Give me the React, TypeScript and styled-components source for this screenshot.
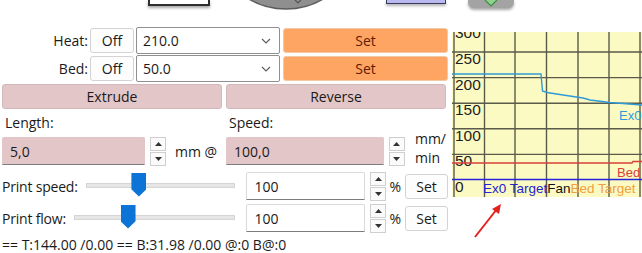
import React from "react";
import styled, { createGlobalStyle } from "styled-components";

const GlobalStyle = createGlobalStyle`
  html, body {
    margin: 0;
    padding: 0;
    background: #ffffff;
    overflow: hidden;
  }
  body {
    font-family: "Open Sans", "Noto Sans", sans-serif;
    font-size: 14px;
    color: #1a1a1a;
  }
`;

const Page = styled.div`
  width: 642px;
  height: 253px;
  overflow: hidden;
`;

/* remains of the toolbar that is cut off above */
const TopStrip = styled.div`
  height: 27px;
  display: flex;
  align-items: flex-start;
  padding-left: 148px;
`;

const WhiteTab = styled.div`
  width: 58px;
  height: 4px;
  background: #ffffff;
  border: 2px solid #2e2e2e;
  border-top: none;
  box-shadow: 0 2px 3px rgba(0, 0, 0, 0.35);
`;

const BlueTab = styled.div`
  width: 58px;
  height: 3px;
  margin-left: 26px;
  background: #b9b9ef;
  border: 1px solid #3a3a5a;
  border-top: none;
  box-shadow: 0 2px 3px rgba(0, 0, 0, 0.3);
`;

const GrayTab = styled.div`
  width: 46px;
  height: 8px;
  margin-left: 22px;
  background: #a3a3a3;
  border-radius: 0 0 6px 6px;
  box-shadow: 0 2px 3px rgba(0, 0, 0, 0.35);
  display: flex;
  justify-content: center;
`;

const Main = styled.div`
  display: flex;
  align-items: flex-start;
`;

const LeftPanel = styled.div`
  width: 446px;
  padding-left: 2px;
  display: flex;
  flex-direction: column;
`;

const TempRow = styled.div`
  display: flex;
  align-items: center;
  height: 27px;
  margin-bottom: 1px;
`;

const RowLabel = styled.div`
  width: 86px;
  text-align: right;
  padding-right: 2px;
`;

const PlainButton = styled.button<{ $w?: number }>`
  font: inherit;
  width: ${(p) => (p.$w ? `${p.$w}px` : "auto")};
  height: 25px;
  padding: 0;
  background: #fdfdfd;
  border: 1px solid #d3d3d3;
  border-radius: 3px;
  color: #1a1a1a;
`;

const Combo = styled.div`
  box-sizing: border-box;
  width: 144px;
  height: 27px;
  margin-left: 2px;
  display: flex;
  align-items: center;
  justify-content: space-between;
  padding: 0 8px 0 6px;
  background: #ffffff;
  border: 1px solid #8f8f8f;
  border-radius: 2px;
`;

const SetOrange = styled.button`
  font: inherit;
  flex: 1;
  height: 25px;
  margin-left: 3px;
  padding: 0;
  background: #fea564;
  border: 1px solid #f2c9a4;
  border-radius: 3px;
  color: #5e1c02;
`;

const Grid2 = styled.div`
  display: grid;
  grid-template-columns: 220px 220px;
  column-gap: 4px;
`;

const PinkButton = styled.button`
  font: inherit;
  height: 25px;
  margin-top: 1px;
  padding: 0;
  background: #e3c7c8;
  border: 1px solid #d4b9ba;
  border-radius: 3px;
  color: #1a1a1a;
`;

const FieldLabel = styled.div`
  height: 28px;
  padding: 4px 0 0 3px;
  box-sizing: border-box;
  line-height: 20px;
`;

const InputLine = styled.div`
  display: flex;
  align-items: center;
  height: 28px;
`;

const TextBox = styled.div<{ $w: number; $pink?: boolean }>`
  box-sizing: border-box;
  width: ${(p) => p.$w}px;
  height: 28px;
  display: flex;
  align-items: center;
  padding-left: 7px;
  background: ${(p) => (p.$pink ? "#e3c6c7" : "#ffffff")};
  border: 1px solid ${(p) => (p.$pink ? "#e3c6c7" : "#dadada")};
  border-bottom: 1px solid #7c7c7c;
  border-radius: 2px 2px 0 0;
`;

const Spinner = styled.div`
  display: flex;
  flex-direction: column;
  gap: 1px;
  margin-left: 5px;
`;

const SpinHalf = styled.div`
  width: 14px;
  height: 12px;
  border: 1px solid #cfcfcf;
  background: #fbfbfb;
  display: flex;
  align-items: center;
  justify-content: center;
`;

const Unit = styled.div`
  margin-left: 9px;
`;

const UnitStack = styled.div`
  margin-left: 10px;
  display: flex;
  flex-direction: column;
  line-height: 19px;
  margin-top: -6px;
`;

const SliderRow = styled.div<{ $top: number }>`
  display: flex;
  align-items: center;
  height: 28px;
  margin-top: ${(p) => p.$top}px;
`;

const SliderLabel = styled.div`
  margin-right: 8px;
  white-space: nowrap;
  letter-spacing: -0.2px;
`;

const Track = styled.div`
  position: relative;
  flex: 1;
  height: 3px;
  background: #e6e6e6;
  border: 1px solid #d5d5d5;
  margin-right: 11px;
  margin-top: -2px;
`;

const Thumb = styled.div`
  position: absolute;
  top: -11px;
  width: 15px;
  height: 24px;
  margin-left: -7px;
  background: #0b74d6;
  clip-path: polygon(0 0, 100% 0, 100% 70%, 50% 100%, 0 70%);
`;

const Percent = styled.div`
  margin-left: 3px;
  margin-right: 4px;
`;

const Status = styled.div`
  margin-top: 4px;
  white-space: nowrap;
  line-height: 17px;
`;

const GraphCol = styled.div`
  margin-left: 4px;
  margin-top: 5px;
  display: flex;
  flex-direction: column;
`;

const GraphFrame = styled.svg`
  display: block;
  background: #fcfac3;
`;

const ArrowSvg = styled.svg`
  display: block;
`;

const SpinArrows = () => (
  <Spinner>
    <SpinHalf>
      <svg width="7" height="4" viewBox="0 0 7 4">
        <path d="M0 4 L3.5 0 L7 4 Z" fill="#333" />
      </svg>
    </SpinHalf>
    <SpinHalf>
      <svg width="7" height="4" viewBox="0 0 7 4">
        <path d="M0 0 L3.5 4 L7 0 Z" fill="#333" />
      </svg>
    </SpinHalf>
  </Spinner>
);

const Chevron = () => (
  <svg width="10" height="6" viewBox="0 0 10 6">
    <path d="M1 1 L5 5 L9 1" fill="none" stroke="#606060" strokeWidth="1.2" />
  </svg>
);

const Slider = ({ pos }: { pos: number }) => (
  <Track>
    <Thumb style={{ left: `${pos}%` }} />
  </Track>
);

// graph scale: 0 deg at y=148, 50 deg per 25.6px
const W = 190;
const H = 165;
const yOf = (v: number) => 148 - v * 0.512;
const gridX = [2, 32.5, 63, 94.5, 126, 157, 188];
const gridVals = [300, 250, 200, 150, 100, 50];
const labelFont = "Liberation Sans, Arial, sans-serif";

const exCurve = [
  [0, 42],
  [89, 42],
  [90.5, 59],
  [95, 60.5],
  [111, 63],
  [131, 66],
  [138, 68],
  [158, 70.5],
  [190, 73],
];

const TempGraph = () => (
  <GraphFrame width={W} height={H} viewBox={`0 0 ${W} ${H}`}>
    {gridX.map((x) => (
      <line key={x} x1={x} y1={0} x2={x} y2={H} stroke="#5a5a4a" strokeWidth="1.4" />
    ))}
    {gridVals.map((v) => (
      <line key={v} x1={0} y1={yOf(v)} x2={W} y2={yOf(v)} stroke="#5a5a4a" strokeWidth="1.4" />
    ))}
    {[300, 250, 200, 150, 100, 50, 0].map((v) => (
      <text key={v} x={3} y={yOf(v) + 12} fontFamily={labelFont} fontSize="15.5" fill="#1e1e1e">
        {v}
      </text>
    ))}
    <polyline
      points={exCurve.map((p) => p.join(",")).join(" ")}
      fill="none"
      stroke="#2f9ad8"
      strokeWidth="1.4"
    />
    <text x={167} y={88} fontFamily={labelFont} fontSize="13" fill="#2f9ad8">
      Ex0
    </text>
    <polyline points="0,131 180,131 181,129.5 190,129.5" fill="none" stroke="#d8403a" strokeWidth="1.4" />
    <text x={165} y={145} fontFamily={labelFont} fontSize="13" fill="#d8403a">
      Bed
    </text>
    <line x1={0} y1={147.5} x2={W} y2={147.5} stroke="#2424d8" strokeWidth="1.6" />
    <text x={31} y={161} fontFamily={labelFont} fontSize="13.5">
      <tspan fill="#2424d0">Ex0 Target</tspan>
      <tspan fill="#111">Fan</tspan>
      <tspan fill="#f0a040">Bed Target</tspan>
    </text>
  </GraphFrame>
);

const App = () => {
  return (
    <>
      <GlobalStyle />
      <Page>
        <TopStrip>
          <WhiteTab />
          <svg width="146" height="12" viewBox="0 0 146 12" style={{ marginLeft: 4 }}>
            <ellipse cx="72" cy="-60" rx="71" ry="69" fill="#8f8f8f" stroke="#5c5c5c" strokeWidth="1.5" />
            <path d="M81 0 L84 3 L87 0" fill="none" stroke="#555" strokeWidth="1.2" />
          </svg>
          <BlueTab />
          <GrayTab>
            <svg width="14" height="7" viewBox="0 0 14 7">
              <path d="M1 0 L7 6 L13 0" fill="#8fd18f" stroke="#3e8e3e" strokeWidth="1.2" />
            </svg>
          </GrayTab>
        </TopStrip>
        <Main>
          <LeftPanel>
            <TempRow>
              <RowLabel>Heat:</RowLabel>
              <PlainButton $w={44}>Off</PlainButton>
              <Combo>
                <span>210.0</span>
                <Chevron />
              </Combo>
              <SetOrange>Set</SetOrange>
            </TempRow>
            <TempRow>
              <RowLabel>Bed:</RowLabel>
              <PlainButton $w={44}>Off</PlainButton>
              <Combo>
                <span>50.0</span>
                <Chevron />
              </Combo>
              <SetOrange>Set</SetOrange>
            </TempRow>
            <Grid2>
              <PinkButton>Extrude</PinkButton>
              <PinkButton>Reverse</PinkButton>
              <FieldLabel>Length:</FieldLabel>
              <FieldLabel>Speed:</FieldLabel>
              <InputLine>
                <TextBox $w={143} $pink>
                  5,0
                </TextBox>
                <SpinArrows />
                <Unit>mm @</Unit>
              </InputLine>
              <InputLine>
                <TextBox $w={159} $pink>
                  100,0
                </TextBox>
                <SpinArrows />
                <UnitStack>
                  <span>mm/</span>
                  <span>min</span>
                </UnitStack>
              </InputLine>
            </Grid2>
            <SliderRow $top={7}>
              <SliderLabel>Print speed:</SliderLabel>
              <Slider pos={35} />
              <TextBox $w={119}>100</TextBox>
              <SpinArrows />
              <Percent>%</Percent>
              <PlainButton $w={43}>Set</PlainButton>
            </SliderRow>
            <SliderRow $top={4}>
              <SliderLabel>Print flow:</SliderLabel>
              <Slider pos={33} />
              <TextBox $w={119}>100</TextBox>
              <SpinArrows />
              <Percent>%</Percent>
              <PlainButton $w={43}>Set</PlainButton>
            </SliderRow>
            <Status>== T:144.00 /0.00 == B:31.98 /0.00 @:0 B@:0</Status>
          </LeftPanel>
          <GraphCol>
            <TempGraph />
            <ArrowSvg width="80" height="50" viewBox="0 0 80 50">
              <line x1="23" y1="40" x2="45" y2="12" stroke="#e3211f" strokeWidth="2" />
              <path d="M49 7 L40 12 L47 17 Z" fill="#e3211f" />
            </ArrowSvg>
          </GraphCol>
        </Main>
      </Page>
    </>
  );
};

export default App;
